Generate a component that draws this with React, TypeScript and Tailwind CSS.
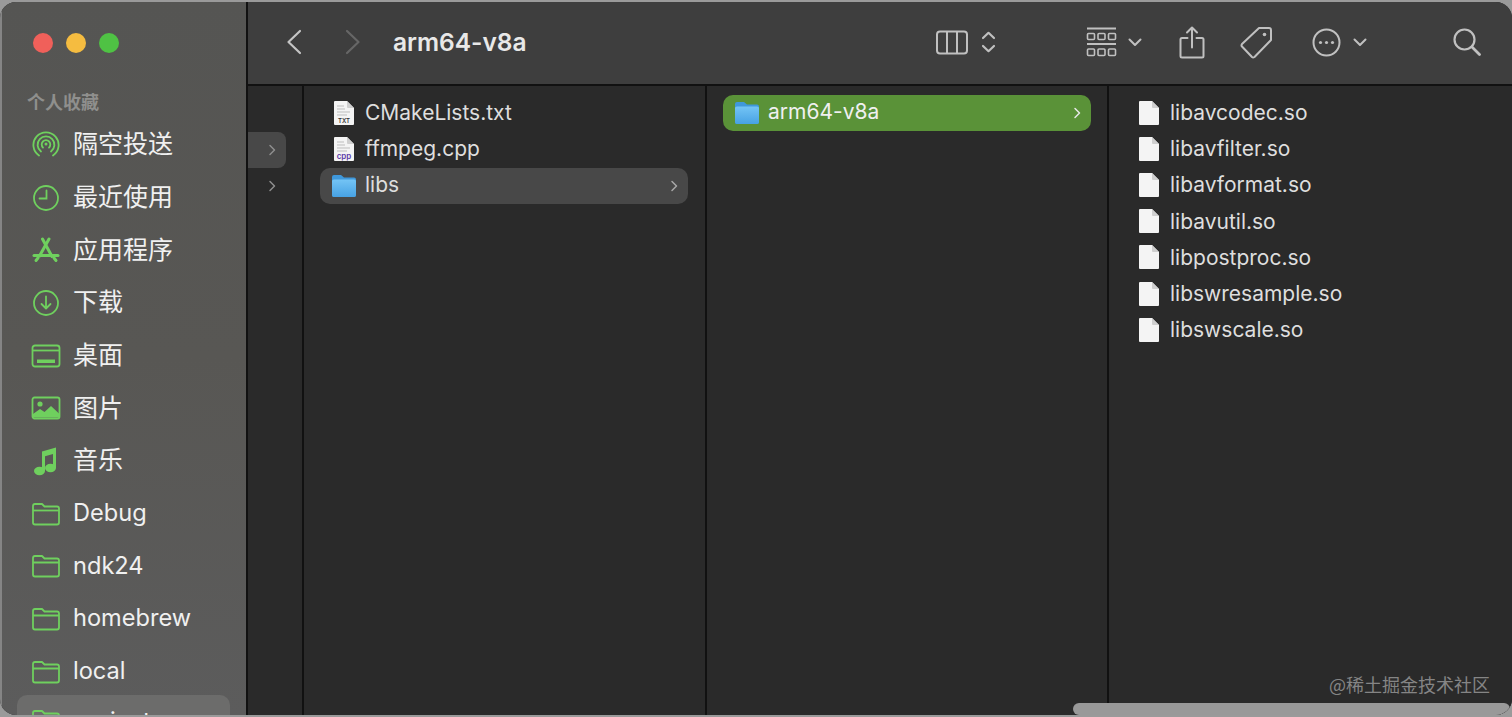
import React from "react";

const latin = "font-['Inter','Noto_Sans_CJK_SC',sans-serif]";
const G = "#6fd05e";

const Air = () => (
  <svg width="28" height="28" viewBox="0 0 28 28" fill="none" stroke={G} strokeWidth="1.8" strokeLinecap="round">
    <path d="M7 24.5A12.6 12.6 0 1 1 21 24.5" />
    <path d="M9 20.5A8.4 8.4 0 1 1 19 20.5" />
    <path d="M11 16.6A4.3 4.3 0 1 1 17 16.6" />
    <circle cx="14" cy="13" r="1.5" fill={G} stroke="none" />
  </svg>
);
const Clock = () => (
  <svg width="28" height="28" viewBox="0 0 28 28" fill="none" stroke={G} strokeWidth="1.8" strokeLinecap="round">
    <circle cx="14" cy="14" r="12" />
    <path d="M14.5 6.5V14.5H7.5" />
  </svg>
);
const Apps = () => (
  <svg width="28" height="28" viewBox="0 0 28 28" fill="none" stroke={G} strokeWidth="3" strokeLinecap="round">
    <path d="M10.5 3L20 20.5" />
    <path d="M17 3L7.5 20" />
    <path d="M2 19.5H26" />
    <path d="M4 24.5L6 22M24 24.5L22 22" />
  </svg>
);
const Down = () => (
  <svg width="28" height="28" viewBox="0 0 28 28" fill="none" stroke={G} strokeWidth="1.8" strokeLinecap="round" strokeLinejoin="round">
    <circle cx="14" cy="14" r="12" />
    <path d="M14 7.5V19M9.5 15L14 19.5L18.5 15" />
  </svg>
);
const Desk = () => (
  <svg width="30" height="24" viewBox="0 0 30 24" fill="none" stroke={G} strokeWidth="1.8">
    <rect x="1.5" y="1.5" width="27" height="21" rx="2.5" />
    <path d="M1.5 6.5H28.5" />
    <rect x="6" y="15.5" width="18" height="3.5" fill={G} stroke="none" />
  </svg>
);
const Pic = () => (
  <svg width="30" height="24" viewBox="0 0 30 24" fill="none" stroke={G} strokeWidth="1.8">
    <rect x="1.5" y="1.5" width="27" height="21" rx="2" />
    <circle cx="9" cy="8" r="2.6" fill={G} stroke="none" />
    <path d="M2 21.5V18L9 13L13.5 16L20 10L28 17.5V21.5Z" fill={G} stroke="none" />
  </svg>
);
const Music = () => (
  <svg width="26" height="30" viewBox="0 0 26 30" fill={G}>
    <path d="M9 5.5L23 1.5V22H20V8L12 10.3V25H9Z" />
    <ellipse cx="6.5" cy="25" rx="5.5" ry="4.2" />
    <ellipse cx="17.5" cy="22" rx="5.5" ry="4.2" />
  </svg>
);
const SideFolder = () => (
  <svg width="30" height="24" viewBox="0 0 30 24" fill="none" stroke={G} strokeWidth="1.8" strokeLinejoin="round">
    <path d="M2 5V20.5Q2 22.5 4 22.5H26Q28 22.5 28 20.5V6.5Q28 4.5 26 4.5H13.5L11 2H4Q2 2 2 4Z" />
    <path d="M2 8.5H28" />
  </svg>
);

const BlueFolder = () => (
  <svg width="26" height="24" viewBox="0 0 26 24">
    <defs>
      <linearGradient id="bf" x1="0" y1="0" x2="0" y2="1">
        <stop offset="0" stopColor="#74c4f5" />
        <stop offset="1" stopColor="#47a2e4" />
      </linearGradient>
    </defs>
    <path d="M1 3Q1 1 3 1H10L13 3.5H23Q25 3.5 25 5.5V21Q25 23 23 23H3Q1 23 1 21Z" fill="#3f98db" />
    <path d="M1 7Q1 5.5 3 5.5H23Q25 5.5 25 7V21Q25 23 23 23H3Q1 23 1 21Z" fill="url(#bf)" />
  </svg>
);

const Page = ({ label, labelColor, lines }: { label?: string; labelColor?: string; lines?: boolean }) => (
  <svg width="22" height="26" viewBox="0 0 22 26">
    <path d="M2 1H14L21 8V24Q21 25 20 25H2Q1 25 1 24V2Q1 1 2 1Z" fill="#f4f4f4" />
    <path d="M14 1V7Q14 8 15 8H21Z" fill="#cfcfcf" />
    {lines && <path d="M4 6H11M4 9H12M4 12H17M4 15H14" stroke="#bdbdbd" strokeWidth="1" />}
    {label && (
      <text x="11" y="23" textAnchor="middle" fontSize={label === "cpp" ? 8 : 6} fontWeight="600" fill={labelColor} fontFamily="Inter, sans-serif">
        {label}
      </text>
    )}
  </svg>
);

const Chev = ({ color = "#a8a8a8" }: { color?: string }) => (
  <svg width="8" height="12" viewBox="0 0 8 12" fill="none" stroke={color} strokeWidth="1.5" strokeLinecap="round" strokeLinejoin="round">
    <path d="M2 1.5L6.5 6L2 10.5" />
  </svg>
);

const ToolChev = () => (
  <svg width="14" height="9" viewBox="0 0 14 9" fill="none" stroke="#c0c0c0" strokeWidth="2" strokeLinecap="round" strokeLinejoin="round">
    <path d="M1.5 1.5L7 7L12.5 1.5" />
  </svg>
);

const cjk = "text-[25px]";
const lat = "text-[23.6px] pb-[2px]";
const sidebar: [React.ReactNode, string, string][] = [
  [<Air />, "隔空投送", cjk],
  [<Clock />, "最近使用", cjk],
  [<Apps />, "应用程序", cjk],
  [<Down />, "下载", cjk],
  [<Desk />, "桌面", cjk],
  [<Pic />, "图片", cjk],
  [<Music />, "音乐", cjk],
  [<SideFolder />, "Debug", lat],
  [<SideFolder />, "ndk24", lat],
  [<SideFolder />, "homebrew", lat],
  [<SideFolder />, "local", lat],
];

const libs = ["libavcodec.so", "libavfilter.so", "libavformat.so", "libavutil.so", "libpostproc.so", "libswresample.so", "libswscale.so"];

function FileRow({ icon, name }: { icon: React.ReactNode; name: string }) {
  return (
    <div className="flex h-[36.2px] items-center">
      <div className="flex w-[26px] justify-center">{icon}</div>
      <span className="ml-[8px] text-[21px] text-[#dedede]">{name}</span>
    </div>
  );
}

export default function App() {
  return (
    <div className={`h-[717px] w-[1512px] overflow-hidden bg-[#9a9a9a] ${latin}`}>
      <div className="relative mt-[2px] flex h-[713px] w-[1512px] overflow-hidden rounded-[16px] bg-[#2a2a2a]">
        {/* Sidebar */}
        <aside className="flex w-[246px] shrink-0 flex-col overflow-hidden border-l-2 border-[#858585] bg-gradient-to-b from-[#555553] via-[#585754] to-[#5c5c5c]">
          <div className="flex gap-[13px] pl-[31px] pt-[31px]">
            <span className="h-5 w-5 rounded-full bg-[#f0605a]" />
            <span className="h-5 w-5 rounded-full bg-[#f5bc40]" />
            <span className="h-5 w-5 rounded-full bg-[#4fc244]" />
          </div>
          <div className="ml-[25px] mt-[38px] text-[18px] font-bold leading-[24px] text-[#8f8f8d]">个人收藏</div>
          <div className="mt-[3.5px] flex flex-col">
            {sidebar.map(([icon, label, size]) => (
              <div key={label} className="flex h-[52.7px] shrink-0 items-center">
                <div className="ml-[28px] flex w-[32px] justify-center">{icon}</div>
                <span className={`ml-[11px] ${size} leading-none text-[#f0f0f0]`}>{label}</span>
              </div>
            ))}
            <div className="-mt-[3.5px] ml-[15px] flex h-[52px] w-[213px] shrink-0 items-center rounded-[10px] bg-[#6c6c6b] pl-[14px]">
              <SideFolder />
              <span className="ml-[12px] text-[23.6px] leading-none text-[#f0f0f0]">project</span>
            </div>
          </div>
        </aside>

        <div className="flex min-w-0 flex-1 flex-col border-l-2 border-[#111]">
          {/* Toolbar */}
          <header className="flex h-[84px] shrink-0 items-center border-b-2 border-[#111] bg-[#3e3e3e] pb-[2px]">
            <svg className="ml-[38px]" width="16" height="26" viewBox="0 0 16 26" fill="none" stroke="#c4c4c4" strokeWidth="2.2" strokeLinecap="round" strokeLinejoin="round">
              <path d="M14 2L2.5 13L14 24" />
            </svg>
            <svg className="ml-[43px]" width="16" height="26" viewBox="0 0 16 26" fill="none" stroke="#666" strokeWidth="2.2" strokeLinecap="round" strokeLinejoin="round">
              <path d="M2 2L13.5 13L2 24" />
            </svg>
            <span className="ml-[32px] text-[24.5px] font-semibold text-[#e8e8e8]">arm64-v8a</span>
            <svg className="ml-[409px]" width="32" height="25" viewBox="0 0 32 25" fill="none" stroke="#c0c0c0" strokeWidth="2">
              <rect x="1" y="1.5" width="30" height="22" rx="3" />
              <path d="M11 1.5V23.5M21 1.5V23.5" />
            </svg>
            <svg className="ml-[13px]" width="15" height="22" viewBox="0 0 15 22" fill="none" stroke="#c0c0c0" strokeWidth="2.2" strokeLinecap="round" strokeLinejoin="round">
              <path d="M2 7L7.5 1.8L13 7M2 15L7.5 20.2L13 15" />
            </svg>
            <svg className="ml-[90px]" width="31" height="30" viewBox="0 0 31 30" fill="none" stroke="#c0c0c0" strokeWidth="1.6">
              <path d="M1 1.5H30M1 17H30" strokeWidth="2" />
              <rect x="1.5" y="6.5" width="7" height="6" rx="1" />
              <rect x="12" y="6.5" width="7" height="6" rx="1" />
              <rect x="22.5" y="6.5" width="7" height="6" rx="1" />
              <rect x="1.5" y="22" width="7" height="6.5" rx="1" />
              <rect x="12" y="22" width="7" height="6.5" rx="1" />
              <rect x="22.5" y="22" width="7" height="6.5" rx="1" />
            </svg>
            <div className="ml-[11px]"><ToolChev /></div>
            <svg className="ml-[37px]" width="26" height="33" viewBox="0 0 26 33" fill="none" stroke="#c0c0c0" strokeWidth="2" strokeLinecap="round" strokeLinejoin="round">
              <path d="M8.5 12H3Q1.5 12 1.5 13.5V30Q1.5 31.5 3 31.5H23Q24.5 31.5 24.5 30V13.5Q24.5 12 23 12H17.5" />
              <path d="M13 21.5V1.5M8 6.5L13 1.5L18 6.5" />
            </svg>
            <svg className="ml-[35px]" width="33" height="33" viewBox="0 0 33 33" fill="none" stroke="#c0c0c0" strokeWidth="2" strokeLinejoin="round">
              <path d="M19 2H29Q31 2 31 4V14L14.5 31Q13 32 12 31L2 20.5Q1 19.5 2 18Z" />
              <circle cx="24.5" cy="8.5" r="1.8" fill="#c0c0c0" stroke="none" />
            </svg>
            <svg className="ml-[39px]" width="29" height="29" viewBox="0 0 29 29" fill="none" stroke="#c0c0c0" strokeWidth="2">
              <circle cx="14.5" cy="14.5" r="13" />
              <circle cx="8.5" cy="14.5" r="1.6" fill="#c0c0c0" stroke="none" />
              <circle cx="14.5" cy="14.5" r="1.6" fill="#c0c0c0" stroke="none" />
              <circle cx="20.5" cy="14.5" r="1.6" fill="#c0c0c0" stroke="none" />
            </svg>
            <div className="ml-[12px]"><ToolChev /></div>
            <svg className="ml-[86px]" width="28" height="28" viewBox="0 0 28 28" fill="none" stroke="#c0c0c0" strokeWidth="2.2" strokeLinecap="round">
              <circle cx="11.5" cy="11.5" r="10" />
              <path d="M19 19L26.5 26.5" strokeWidth="2.8" />
            </svg>
          </header>

          {/* Columns */}
          <main className="flex min-h-0 flex-1 bg-[#2a2a2a]">
            <section className="w-[54px] shrink-0 pt-[46px]">
              <div className="flex h-[36px] w-[38px] items-center justify-end rounded-r-[8px] bg-[#484848] pr-[10px]"><Chev color="#8e8e8e" /></div>
              <div className="flex h-[36px] w-[38px] items-center justify-end pr-[10px]"><Chev color="#8e8e8e" /></div>
            </section>
            <section className="w-[403px] shrink-0 border-l-2 border-[#111] pl-[16px] pr-[17px] pt-[8.6px]">
              <div className="pl-[11px]">
                <FileRow icon={<Page label="TXT" labelColor="#333" lines />} name="CMakeLists.txt" />
              </div>
              <div className="pl-[11px]">
                <FileRow icon={<Page label="cpp" labelColor="#5b3aa8" lines />} name="ffmpeg.cpp" />
              </div>
              <div className="mt-[1px] flex h-[36px] items-center rounded-[10px] bg-[#484848] pl-[11px] pr-[10px]">
                <BlueFolder />
                <span className="ml-[8px] flex-1 pb-[2px] text-[21px] text-[#dedede]">libs</span>
                <Chev />
              </div>
            </section>
            <section className="w-[402px] shrink-0 border-l-2 border-[#111] pl-[16px] pr-[16px] pt-[9px]">
              <div className="flex h-[36px] items-center rounded-[10px] bg-[#5a9238] pl-[11px] pr-[10px]">
                <BlueFolder />
                <span className="ml-[8px] flex-1 pb-[2px] text-[21px] text-[#f0f0f0]">arm64-v8a</span>
                <Chev color="#e8e8e8" />
              </div>
            </section>
            <section className="min-w-0 flex-1 border-l-2 border-[#111] pl-[27px] pt-[8.6px]">
              {libs.map((n) => (
                <FileRow key={n} icon={<Page />} name={n} />
              ))}
            </section>
          </main>
        </div>

        {/* Overlays */}
        <div className="absolute bottom-[19px] right-[22px] text-[18px] leading-[24px] text-[#858585] font-['Noto_Sans_CJK_SC',sans-serif]">@稀土掘金技术社区</div>
        <div className="absolute bottom-0 right-[2px] h-[12px] w-[437px] rounded-full bg-[#999999]" />
      </div>
    </div>
  );
}
